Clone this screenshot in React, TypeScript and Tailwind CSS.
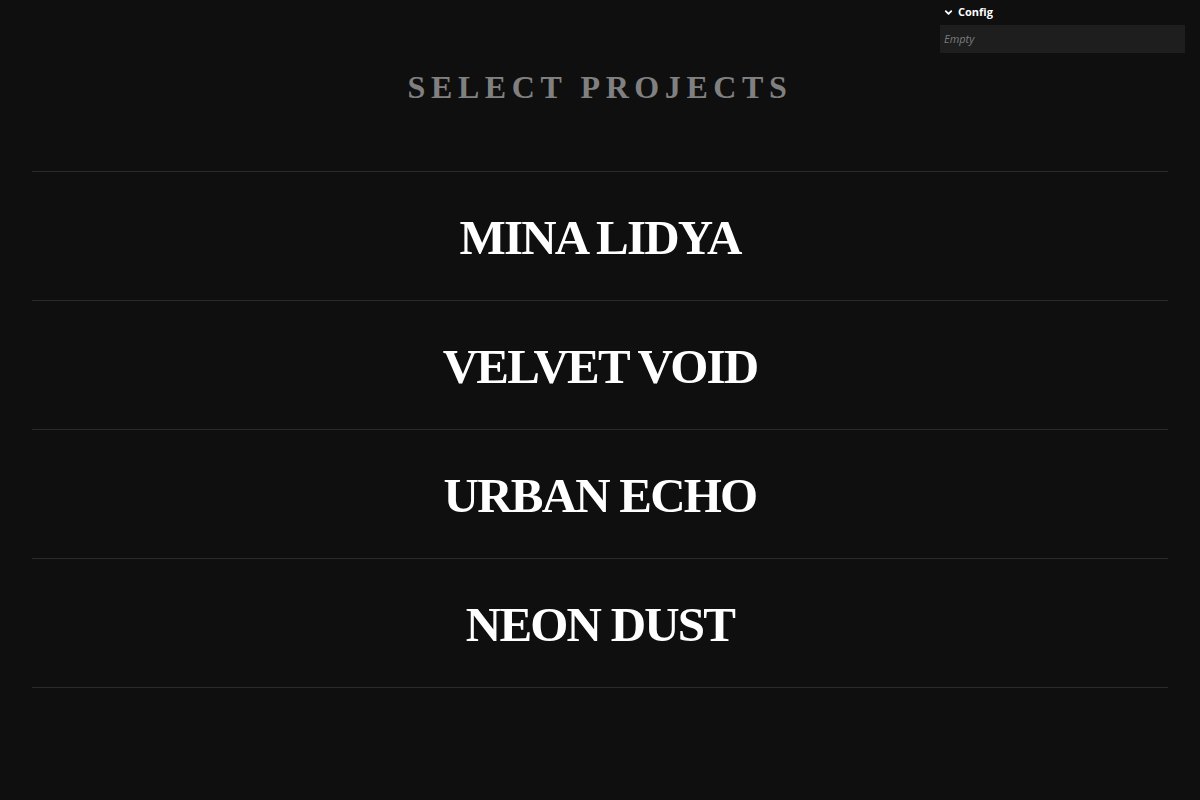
import { ChevronDown } from "lucide-react";

const projects = ["MINA LIDYA", "VELVET VOID", "URBAN ECHO", "NEON DUST"];

export default function App() {
  return (
    <div className="relative min-h-[800px] w-full bg-[#0f0f0f] font-['Liberation_Serif',serif]">
      <div className="absolute right-[15px] top-0 w-[245px] font-['Open_Sans','Noto_Sans',sans-serif]">
        <div className="flex h-[25px] items-center gap-[4px] pl-[3px] text-[11px] font-bold text-white">
          <ChevronDown className="h-[11px] w-[11px]" strokeWidth={4} />
          <span>Config</span>
        </div>
        <div className="flex h-[28px] items-center bg-[#1e1e1e] px-[4px] text-[11px] italic text-[#7d7d7d]">
          Empty
        </div>
      </div>

      <div className="px-8 pt-[67px]">
        <h1 className="text-center text-[32px] font-bold leading-[40px] tracking-[5.6px] text-[#808080]">
          SELECT PROJECTS
        </h1>

        <ul className="mt-[64px] border-b border-[#2a2a2a]">
          {projects.map((name) => (
            <li
              key={name}
              className="border-t border-[#2a2a2a] pb-[38px] pt-[42px] text-center text-[49px] font-bold leading-[48px] tracking-[-1.8px] text-white"
            >
              {name}
            </li>
          ))}
        </ul>
      </div>
    </div>
  );
}
